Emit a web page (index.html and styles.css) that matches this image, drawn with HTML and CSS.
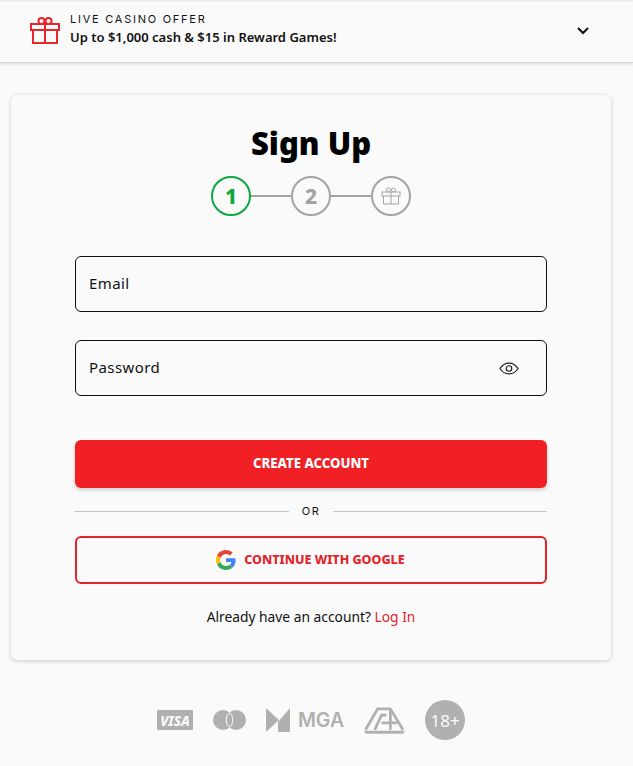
FILE: index.html
```html
<!DOCTYPE html>
<html lang="en">
<head>
<meta charset="utf-8">
<title>Sign Up</title>
<link rel="stylesheet" href="styles.css">
</head>
<body>
<header class="offer">
  <svg class="offer-icon" width="30" height="27" viewBox="0 0 30 27" fill="none" stroke="#e8262c" stroke-width="2">
    <rect x="1" y="7" width="28" height="6"/>
    <path d="M3 13v13h24V13M15 7v19"/>
    <circle cx="11.500" cy="4" r="3"/>
    <circle cx="18.500" cy="4" r="3"/>
  </svg>
  <div class="offer-text">
    <div class="offer-kicker">LIVE CASINO OFFER</div>
    <div class="offer-title">Up to $1,000 cash &amp; $15 in Reward Games!</div>
  </div>
  <svg class="offer-chevron" width="14" height="10" viewBox="0 0 14 10" fill="none" stroke="#111" stroke-width="2"><path d="M2 2l5 5 5-5"/></svg>
</header>
<main class="page">
  <section class="card">
    <h1 class="title">Sign Up</h1>
    <div class="steps">
      <div class="step step-active">1</div>
      <div class="step-line"></div>
      <div class="step">2</div>
      <div class="step-line"></div>
      <div class="step">
        <svg width="20" height="18" viewBox="0 0 20 18" fill="none" stroke="#a3a3a3" stroke-width="1">
          <rect x="1" y="5" width="18" height="4"/>
          <path d="M2.500 9v8h15V9M10 5v12"/>
          <circle cx="7.500" cy="3" r="2"/>
          <circle cx="12.500" cy="3" r="2"/>
        </svg>
      </div>
    </div>
    <form class="form">
      <div class="field"><span>Email</span></div>
      <div class="field field-password">
        <span>Password</span>
        <svg class="field-eye" width="20" height="13" viewBox="0 0 22 14" fill="none" stroke="#222" stroke-width="1.300">
          <path d="M1 7c2.500-3.800 6-6 10-6s7.500 2.200 10 6c-2.500 3.800-6 6-10 6S3.500 10.800 1 7z"/>
          <circle cx="11" cy="7" r="3"/>
        </svg>
      </div>
      <button class="btn-primary" type="button">CREATE ACCOUNT</button>
      <div class="divider"><span>OR</span></div>
      <button class="btn-google" type="button">
        <svg class="google-icon" width="20" height="20" viewBox="0 0 48 48">
          <path fill="#ea4335" d="M24 9.500c3.500 0 6.700 1.200 9.200 3.600l6.900-6.900C35.900 2.400 30.500 0 24 0 14.600 0 6.500 5.400 2.600 13.200l8 6.200C12.500 13.700 17.800 9.500 24 9.500z"/>
          <path fill="#4285f4" d="M47 24.500c0-1.600-.2-3.100-.4-4.500H24v9h12.900c-.6 3-2.200 5.500-4.700 7.200l7.700 6c4.500-4.200 7.100-10.300 7.100-17.700z"/>
          <path fill="#fbbc05" d="M10.600 28.600c-.5-1.400-.8-3-.8-4.600s.3-3.200.8-4.600l-8-6.200C.9 16.400 0 20.100 0 24s.9 7.600 2.600 10.800l8-6.200z"/>
          <path fill="#34a853" d="M24 48c6.500 0 11.900-2.100 15.900-5.800l-7.700-6c-2.200 1.400-4.900 2.300-8.200 2.300-6.200 0-11.500-4.200-13.400-9.900l-8 6.200C6.500 42.600 14.600 48 24 48z"/>
        </svg>
        <span>CONTINUE WITH GOOGLE</span>
      </button>
      <p class="login">Already have an account? <a href="#">Log In</a></p>
    </form>
  </section>
  <footer class="badges">
    <svg class="badge-visa" width="36" height="20" viewBox="0 0 36 20">
      <rect width="36" height="20" rx="1" fill="#b0b0b0"/>
      <text x="18" y="15.500" text-anchor="middle">VISA</text>
    </svg>
    <svg width="33" height="20" viewBox="0 0 33 20">
      <circle cx="10" cy="10" r="10" fill="#b0b0b0"/>
      <circle cx="23" cy="10" r="10" fill="#b0b0b0"/>
      <path d="M16.500 2.500a10 10 0 0 1 0 15a10 10 0 0 1 0-15z" fill="#b0b0b0" stroke="#fafafa" stroke-width="1"/>
    </svg>
    <div class="badge-mga">
      <svg width="24" height="24" viewBox="0 0 24 24" fill="#b0b0b0">
        <path d="M0 0l13 12L0 24z"/>
        <path d="M24 0v24H12V14L24 0z"/>
      </svg>
      <span>MGA</span>
    </div>
    <svg width="41" height="27" viewBox="0 0 42 27" fill="none" stroke="#b0b0b0" stroke-width="2.800">
      <path d="M1.500 23L14 1.500h13L40 23"/>
      <path d="M23 8h-5l-7 15M18 16h8M27 2v21M27 16h7"/>
      <path d="M0 24h42l-2 3H2z" fill="#b0b0b0" stroke="none"/>
    </svg>
    <div class="badge-age">18+</div>
  </footer>
</main>
</body>
</html>
```
FILE: styles.css
```css
* { box-sizing: border-box; }
html, body { margin: 0; height: 766px; overflow: hidden; }
body {
  background: #fafafa;
  color: #111;
  font-family: "Noto Sans", "Open Sans", sans-serif;
  box-shadow: inset 0 2px 2px -1px #e4e4e4;
}
.offer {
  height: 63px;
  display: flex;
  align-items: center;
  padding: 0 43px 6px 30px;
  border-bottom: 1px solid #d9d9d9;
  box-shadow: 0 1px 3px rgba(0,0,0,.12);
}
.offer-icon { flex: none; margin: 4px 10px 0 0; }
.offer-text { flex: 1; }
.offer-chevron { margin-top: 6px; }
.offer-kicker {
  margin-bottom: 1px;
  font-family: "Inter", sans-serif;
  font-size: 11px;
  line-height: 16px;
  letter-spacing: 1.750px;
  color: #111;
}
.offer-title {
  font-size: 13px;
  font-weight: 600;
  line-height: 18px;
  color: #111;
}
.page { width: 622px; padding: 32px 0 0; }
.card {
  width: 600px;
  height: 565px;
  margin-left: 11px;
  padding: 27px 64px 0;
  border-radius: 6px;
  background: #fafafa;
  box-shadow: 0 1px 4px rgba(0,0,0,.2);
}
.title {
  margin: 0;
  text-align: center;
  font-family: "Noto Sans", sans-serif;
  font-size: 31px;
  font-weight: 900;
  line-height: 42px;
  color: #000;
}
.steps {
  display: flex;
  align-items: center;
  justify-content: center;
  margin-top: 12px;
}
.step {
  width: 40px;
  height: 40px;
  display: flex;
  align-items: center;
  justify-content: center;
  border: 2px solid #a3a3a3;
  border-radius: 50%;
  color: #a3a3a3;
  font-size: 21px;
  font-weight: 800;
}
.step-active { border-color: #0aa83f; color: #0aa83f; }
.step-line { width: 40px; height: 2px; background: #a3a3a3; }
.form { margin-top: 40px; }
.field {
  height: 56px;
  display: flex;
  align-items: center;
  justify-content: space-between;
  padding: 0 27px 2px 13px;
  margin-bottom: 28px;
  border: 1px solid #111;
  border-radius: 6px;
  font-size: 15px;
  letter-spacing: .4px;
}
.field-eye { margin-top: 2px; }
.btn-primary {
  display: block;
  width: 100%;
  height: 48px;
  margin-top: 44px;
  padding: 0 0 2px;
  border: 0;
  border-radius: 6px;
  background: #f02024;
  color: #fff;
  font: 800 13.200px "Noto Sans", sans-serif;
  box-shadow: 0 2px 4px rgba(0,0,0,.18);
}
.divider {
  display: flex;
  align-items: center;
  gap: 13px;
  height: 16px;
  margin: 15px 0 17px;
  font: 400 11px "Inter", sans-serif;
  letter-spacing: 1.500px;
}
.divider::before, .divider::after {
  content: "";
  flex: 1;
  height: 1px;
  background: #c4c4c4;
}
.btn-google {
  width: 100%;
  height: 48px;
  display: flex;
  align-items: center;
  justify-content: center;
  gap: 8px;
  padding: 0 1px 2px 0;
  border: 2px solid #e3242b;
  border-radius: 6px;
  background: transparent;
  color: #e3242b;
  font: 800 12.500px "Noto Sans", sans-serif;
}
.google-icon { margin-top: 2px; }
.login {
  margin: 23px 0 0;
  text-align: center;
  font-size: 13.800px;
  line-height: 20px;
}
.login a { color: #e3242b; text-decoration: none; }
.badges {
  display: flex;
  align-items: center;
  justify-content: center;
  gap: 20px;
  height: 40px;
  margin-top: 40px;
}
.badge-visa text {
  font: italic 800 13.500px "Noto Sans", sans-serif;
  fill: #fafafa;
}
.badge-mga {
  display: flex;
  align-items: center;
  gap: 8px;
  color: #b0b0b0;
  font: 600 19.500px "Inter", sans-serif;
}
.badge-age {
  width: 40px;
  height: 40px;
  display: flex;
  align-items: center;
  justify-content: center;
  border-radius: 50%;
  background: #b0b0b0;
  color: #fafafa;
  font-size: 17px;
}
```
